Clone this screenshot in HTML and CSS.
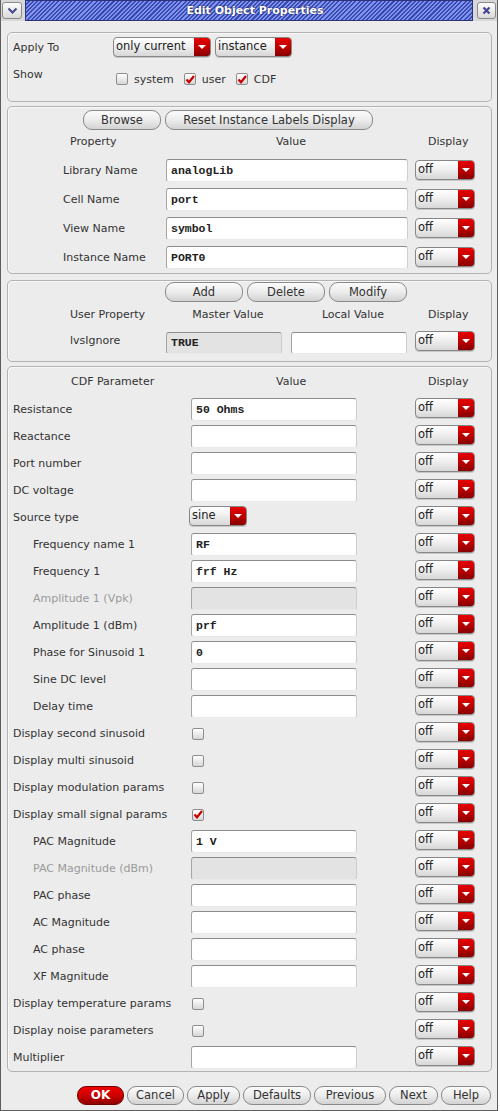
FILE: index.html
```html
<!DOCTYPE html>
<html>
<head>
<meta charset="utf-8">
<link rel="stylesheet" href="styles.css">
</head>
<body>
<div class="win">
  <div class="titlebar">
    <div class="tbtn tbtn-l"><svg width="11" height="7" viewBox="0 0 11 7"><path d="M1.5 1.5 L5.5 5.5 L9.5 1.5" fill="none" stroke="#45458f" stroke-width="2"/></svg></div>
    <div class="title">Edit Object Properties</div>
    <div class="tbtn tbtn-r"><svg width="9" height="9" viewBox="0 0 9 9"><path d="M1.5 1.5 L7.5 7.5 M7.5 1.5 L1.5 7.5" fill="none" stroke="#45458f" stroke-width="2.2"/></svg></div>
  </div>

  <div class="content">
    <section class="grp g1">
      <div class="arow">
        <span class="lbl l1">Apply To</span>
        <div class="dd dd-cur"><span class="dt">only current</span><span class="da"></span></div>
        <div class="dd dd-inst"><span class="dt">instance</span><span class="da"></span></div>
      </div>
      <div class="srow">
        <span class="lbl l1 lshow">Show</span>
        <span class="chk"><span class="cb"></span>system</span>
        <span class="chk"><span class="cb on"><svg width="10" height="9" viewBox="0 0 10 9"><path d="M1.5 4.5 L4 7.2 L9 1" fill="none" stroke="#c80000" stroke-width="2.2"/></svg></span>user</span>
        <span class="chk"><span class="cb on"><svg width="10" height="9" viewBox="0 0 10 9"><path d="M1.5 4.5 L4 7.2 L9 1" fill="none" stroke="#c80000" stroke-width="2.2"/></svg></span>CDF</span>
      </div>
    </section>

    <section class="grp g2">
      <div class="brow b2">
        <button class="btn w-browse">Browse</button>
        <button class="btn w-reset">Reset Instance Labels Display</button>
      </div>
      <div class="prow phead">
        <span class="h-prop">Property</span>
        <span class="h-val">Value</span>
        <span class="h-disp">Display</span>
      </div>
      <div class="plist">
        <div class="prow"><span class="lbl">Library Name</span><div class="in">analogLib</div><div class="dd"><span class="dt">off</span><span class="da"></span></div></div>
        <div class="prow"><span class="lbl">Cell Name</span><div class="in">port</div><div class="dd"><span class="dt">off</span><span class="da"></span></div></div>
        <div class="prow"><span class="lbl">View Name</span><div class="in">symbol</div><div class="dd"><span class="dt">off</span><span class="da"></span></div></div>
        <div class="prow"><span class="lbl">Instance Name</span><div class="in">PORT0</div><div class="dd"><span class="dt">off</span><span class="da"></span></div></div>
      </div>
    </section>

    <section class="grp g3">
      <div class="brow b3">
        <button class="btn w-add">Add</button>
        <button class="btn w-add">Delete</button>
        <button class="btn w-add">Modify</button>
      </div>
      <div class="urow uhead">
        <span class="h-up">User Property</span>
        <span class="h-c">Master Value</span>
        <span class="h-c">Local Value</span>
        <span class="h-disp">Display</span>
      </div>
      <div class="urow">
        <span class="lbl">lvsIgnore</span>
        <div class="in ro">TRUE</div>
        <div class="in"></div>
        <div class="dd"><span class="dt">off</span><span class="da"></span></div>
      </div>
    </section>

    <section class="grp g4">
      <div class="crow chead">
        <span class="h-cdf">CDF Parameter</span>
        <span class="h-cval">Value</span>
        <span class="h-disp">Display</span>
      </div>
      <div class="clist">
        <div class="crow"><span class="lbl">Resistance</span><div class="v"><div class="in">50 Ohms</div></div><div class="dd"><span class="dt">off</span><span class="da"></span></div></div>
        <div class="crow"><span class="lbl">Reactance</span><div class="v"><div class="in"></div></div><div class="dd"><span class="dt">off</span><span class="da"></span></div></div>
        <div class="crow"><span class="lbl">Port number</span><div class="v"><div class="in"></div></div><div class="dd"><span class="dt">off</span><span class="da"></span></div></div>
        <div class="crow"><span class="lbl">DC voltage</span><div class="v"><div class="in"></div></div><div class="dd"><span class="dt">off</span><span class="da"></span></div></div>
        <div class="crow"><span class="lbl">Source type</span><div class="v"><div class="dd dd-src"><span class="dt">sine</span><span class="da"></span></div></div><div class="dd"><span class="dt">off</span><span class="da"></span></div></div>
        <div class="crow"><span class="lbl ind">Frequency name 1</span><div class="v"><div class="in">RF</div></div><div class="dd"><span class="dt">off</span><span class="da"></span></div></div>
        <div class="crow"><span class="lbl ind">Frequency 1</span><div class="v"><div class="in">frf Hz</div></div><div class="dd"><span class="dt">off</span><span class="da"></span></div></div>
        <div class="crow"><span class="lbl ind dis">Amplitude 1 (Vpk)</span><div class="v"><div class="in ro"></div></div><div class="dd"><span class="dt">off</span><span class="da"></span></div></div>
        <div class="crow"><span class="lbl ind">Amplitude 1 (dBm)</span><div class="v"><div class="in">prf</div></div><div class="dd"><span class="dt">off</span><span class="da"></span></div></div>
        <div class="crow"><span class="lbl ind">Phase for Sinusoid 1</span><div class="v"><div class="in">0</div></div><div class="dd"><span class="dt">off</span><span class="da"></span></div></div>
        <div class="crow"><span class="lbl ind">Sine DC level</span><div class="v"><div class="in"></div></div><div class="dd"><span class="dt">off</span><span class="da"></span></div></div>
        <div class="crow"><span class="lbl ind">Delay time</span><div class="v"><div class="in"></div></div><div class="dd"><span class="dt">off</span><span class="da"></span></div></div>
        <div class="crow"><span class="lbl">Display second sinusoid</span><div class="v"><span class="cb"></span></div><div class="dd"><span class="dt">off</span><span class="da"></span></div></div>
        <div class="crow"><span class="lbl">Display multi sinusoid</span><div class="v"><span class="cb"></span></div><div class="dd"><span class="dt">off</span><span class="da"></span></div></div>
        <div class="crow"><span class="lbl">Display modulation params</span><div class="v"><span class="cb"></span></div><div class="dd"><span class="dt">off</span><span class="da"></span></div></div>
        <div class="crow"><span class="lbl">Display small signal params</span><div class="v"><span class="cb on"><svg width="10" height="9" viewBox="0 0 10 9"><path d="M1.5 4.5 L4 7.2 L9 1" fill="none" stroke="#c80000" stroke-width="2.2"/></svg></span></div><div class="dd"><span class="dt">off</span><span class="da"></span></div></div>
        <div class="crow"><span class="lbl ind">PAC Magnitude</span><div class="v"><div class="in">1 V</div></div><div class="dd"><span class="dt">off</span><span class="da"></span></div></div>
        <div class="crow"><span class="lbl ind dis">PAC Magnitude (dBm)</span><div class="v"><div class="in ro"></div></div><div class="dd"><span class="dt">off</span><span class="da"></span></div></div>
        <div class="crow"><span class="lbl ind">PAC phase</span><div class="v"><div class="in"></div></div><div class="dd"><span class="dt">off</span><span class="da"></span></div></div>
        <div class="crow"><span class="lbl ind">AC Magnitude</span><div class="v"><div class="in"></div></div><div class="dd"><span class="dt">off</span><span class="da"></span></div></div>
        <div class="crow"><span class="lbl ind">AC phase</span><div class="v"><div class="in"></div></div><div class="dd"><span class="dt">off</span><span class="da"></span></div></div>
        <div class="crow"><span class="lbl ind">XF Magnitude</span><div class="v"><div class="in"></div></div><div class="dd"><span class="dt">off</span><span class="da"></span></div></div>
        <div class="crow"><span class="lbl">Display temperature params</span><div class="v"><span class="cb"></span></div><div class="dd"><span class="dt">off</span><span class="da"></span></div></div>
        <div class="crow"><span class="lbl">Display noise parameters</span><div class="v"><span class="cb"></span></div><div class="dd"><span class="dt">off</span><span class="da"></span></div></div>
        <div class="crow"><span class="lbl">Multiplier</span><div class="v"><div class="in"></div></div><div class="dd"><span class="dt">off</span><span class="da"></span></div></div>
      </div>
    </section>

    <div class="actions">
      <button class="btn ok w-ok">OK</button>
      <button class="btn w-cancel">Cancel</button>
      <button class="btn w-apply">Apply</button>
      <button class="btn w-def">Defaults</button>
      <button class="btn w-prev">Previous</button>
      <button class="btn w-next">Next</button>
      <button class="btn w-help">Help</button>
    </div>
  </div>
</div>
</body>
</html>
```

FILE: styles.css
```css
* { box-sizing: border-box; }
body {
  margin: 0;
  background: #ffffff;
  font-family: "DejaVu Sans", "Liberation Sans", sans-serif;
  font-size: 11px;
  color: #333333;
}
.win {
  width: 498px;
  height: 1111px;
  border: 1px solid #5e5e5e;
  border-top: 0;
  background: #ececec;
  display: flex;
  flex-direction: column;
}

/* title bar */
.titlebar {
  height: 21px;
  display: flex;
  background: #d8d8d8;
  flex: none;
}
.tbtn {
  width: 20px;
  height: 17px;
  margin-top: 2px;
  border: 1px solid #8a8a8a;
  border-radius: 3px;
  background: linear-gradient(#fdfdfd, #d9d9d9);
  display: flex;
  align-items: center;
  justify-content: center;
}
.tbtn-l { margin-left: 1px; margin-right: 3px; }
.tbtn-r { margin-left: 4px; margin-right: 1px; width: 19px; }
.title {
  flex: 1;
  height: 21px;
  border: 1px solid #2b3479;
  background: repeating-linear-gradient(135deg, #8092f2 0px, #8092f2 1.5px, #3a4cae 1.5px, #3a4cae 3px);
  color: #ffffff;
  font-weight: bold;
  font-size: 11px;
  text-align: center;
  padding-left: 12px;
  line-height: 19px;
  text-shadow: 0 0 2px #1e2660, 0 0 1px #1e2660;
}

/* content */
.content {
  flex: 1;
  display: flex;
  flex-direction: column;
  padding: 11px 5px 0 6px;
}
.grp {
  border: 1px solid #b3b3b3;
  border-radius: 5px;
  box-shadow: inset 1px 1px 0 #f8f8f8;
}
.lbl { white-space: nowrap; }

/* group 1 */
.g1 { padding: 4px 0 12px 5px; height: 70px; }
.arow { display: flex; align-items: center; height: 20px; }
.l1 { width: 100px; }
.srow { display: flex; align-items: center; height: 18px; margin-top: 13px; }
.lshow { align-self: flex-start; margin-top: -2px; }
.chk { display: flex; align-items: center; gap: 6px; margin-right: 10px; margin-left: 3px; }
.chk + .chk { margin-left: 0; }

/* checkbox */
.cb {
  display: inline-flex;
  align-items: center;
  justify-content: center;
  width: 12px;
  height: 12px;
  border: 1px solid #8e8e8e;
  border-radius: 2px;
  background: linear-gradient(#ffffff, #d6d6d6);
  flex: none;
}

/* dropdown */
.dd {
  display: flex;
  height: 20px;
  border: 1px solid #878787;
  border-radius: 4px;
  overflow: hidden;
  background: linear-gradient(#ffffff 0%, #f0f0f0 45%, #d7d7d7 100%);
  box-shadow: 0 1px 0 #c8c8c8;
  width: 60px;
}
.dt {
  flex: 1;
  padding-left: 2px;
  line-height: 16px;
  color: #222222;
  font-size: 11.5px;
  white-space: nowrap;
  overflow: hidden;
}
.da {
  width: 16px;
  flex: none;
  background: linear-gradient(#e60000 0%, #c40000 45%, #870000 100%);
  position: relative;
}
.da::after {
  content: "";
  position: absolute;
  left: 4px;
  top: 7px;
  border-left: 4px solid transparent;
  border-right: 4px solid transparent;
  border-top: 4px solid #ffffff;
}
.dd-cur { width: 98px; }
.dd-inst { width: 77px; margin-left: 4px; }
.dd-src { width: 58px; margin-left: -2px; margin-top: -3px; }

/* inputs */
.in {
  height: 23px;
  border: 1px solid;
  border-color: #8c8c8c #cdcdcd #e9e9e9 #a5a5a5;
  border-radius: 3px;
  background: #ffffff;
  font-family: "Liberation Mono", "DejaVu Sans Mono", monospace;
  font-weight: bold;
  font-size: 11.5px;
  color: #222222;
  padding-left: 4px;
  line-height: 21px;
  white-space: pre;
}
.in.ro { background: #e3e3e3; }

/* buttons */
.btn {
  height: 20px;
  border: 1px solid #8a8a8a;
  border-radius: 9px;
  background: linear-gradient(#fbfbfb 0%, #ececec 50%, #d2d2d2 100%);
  font-family: "DejaVu Sans", "Liberation Sans", sans-serif;
  font-size: 11.5px;
  color: #333333;
  padding: 0;
  line-height: 18px;
}
.brow { display: flex; gap: 4px; }

/* group 2 */
.g2 { margin-top: 4px; padding: 3px 0 4px 0; }
.b2 { padding-left: 75px; }
.w-browse { width: 78px; }
.w-reset { width: 208px; }
.prow {
  display: grid;
  grid-template-columns: 103px 249px 60px;
  align-items: center;
  padding-left: 55px;
}
.prow .in { width: 242px; }
.phead { margin-top: 5px; line-height: 14px; height: 14px; }
.h-prop { padding-left: 7px; }
.h-val { text-align: center; padding-left: 1px; }
.h-disp { padding-left: 13px; white-space: nowrap; }
.plist { display: flex; flex-direction: column; gap: 6px; margin-top: 10px; }
.plist .prow { height: 23px; }
.plist .dd { align-self: start; margin-top: 1px; }

/* group 3 */
.g3 { margin-top: 6px; padding: 1px 0 7px 0; }
.b3 { padding-left: 157px; }
.w-add { width: 78px; }
.urow {
  display: grid;
  grid-template-columns: 96px 125px 124px 60px;
  padding-left: 62px;
  align-items: start;
}
.urow .in { width: 116px; }
.uhead { margin-top: 6px; line-height: 14px; height: 14px; }
.uhead + .urow { margin-top: 9px; height: 23px; }
.uhead + .urow .in { height: 22px; margin-top: 1px; line-height: 20px; }
.uhead + .urow .lbl { line-height: 20px; }
.h-up { padding-left: 0; }
.h-c { width: 116px; text-align: center; padding-left: 8px; white-space: nowrap; }

/* group 4 */
.g4 { margin-top: 4px; padding: 8px 0 2px 5px; }
.crow {
  display: grid;
  grid-template-columns: 178px 224px 60px;
  align-items: center;
}
.chead { line-height: 14px; height: 14px; }
.h-cdf { padding-left: 58px; }
.h-cval { padding-left: 85px; }
.clist { display: flex; flex-direction: column; gap: 4px; margin-top: 9px; }
.clist .crow { height: 23px; }
.clist .crow > .dd { align-self: start; }
.v { display: flex; align-items: center; }
.v .in { width: 166px; }
.v .cb { margin-left: 1px; }
.ind { padding-left: 20px; }
.dis { color: #9a9a9a; }

/* actions */
.actions {
  display: flex;
  justify-content: flex-end;
  gap: 3px;
  margin-top: 14px;
  padding-right: 1px;
}
.actions .btn { height: 19px; line-height: 17px; }
.ok {
  background: linear-gradient(#f00000 0%, #cc0000 50%, #8e0000 100%);
  border-color: #6e0000;
  color: #ffffff;
  font-weight: bold;
  font-size: 12px;
}
.w-ok { width: 47px; }
.w-cancel { width: 57px; }
.w-apply { width: 53px; }
.w-def { width: 68px; }
.w-prev { width: 72px; }
.w-next { width: 49px; }
.w-help { width: 50px; }
```
